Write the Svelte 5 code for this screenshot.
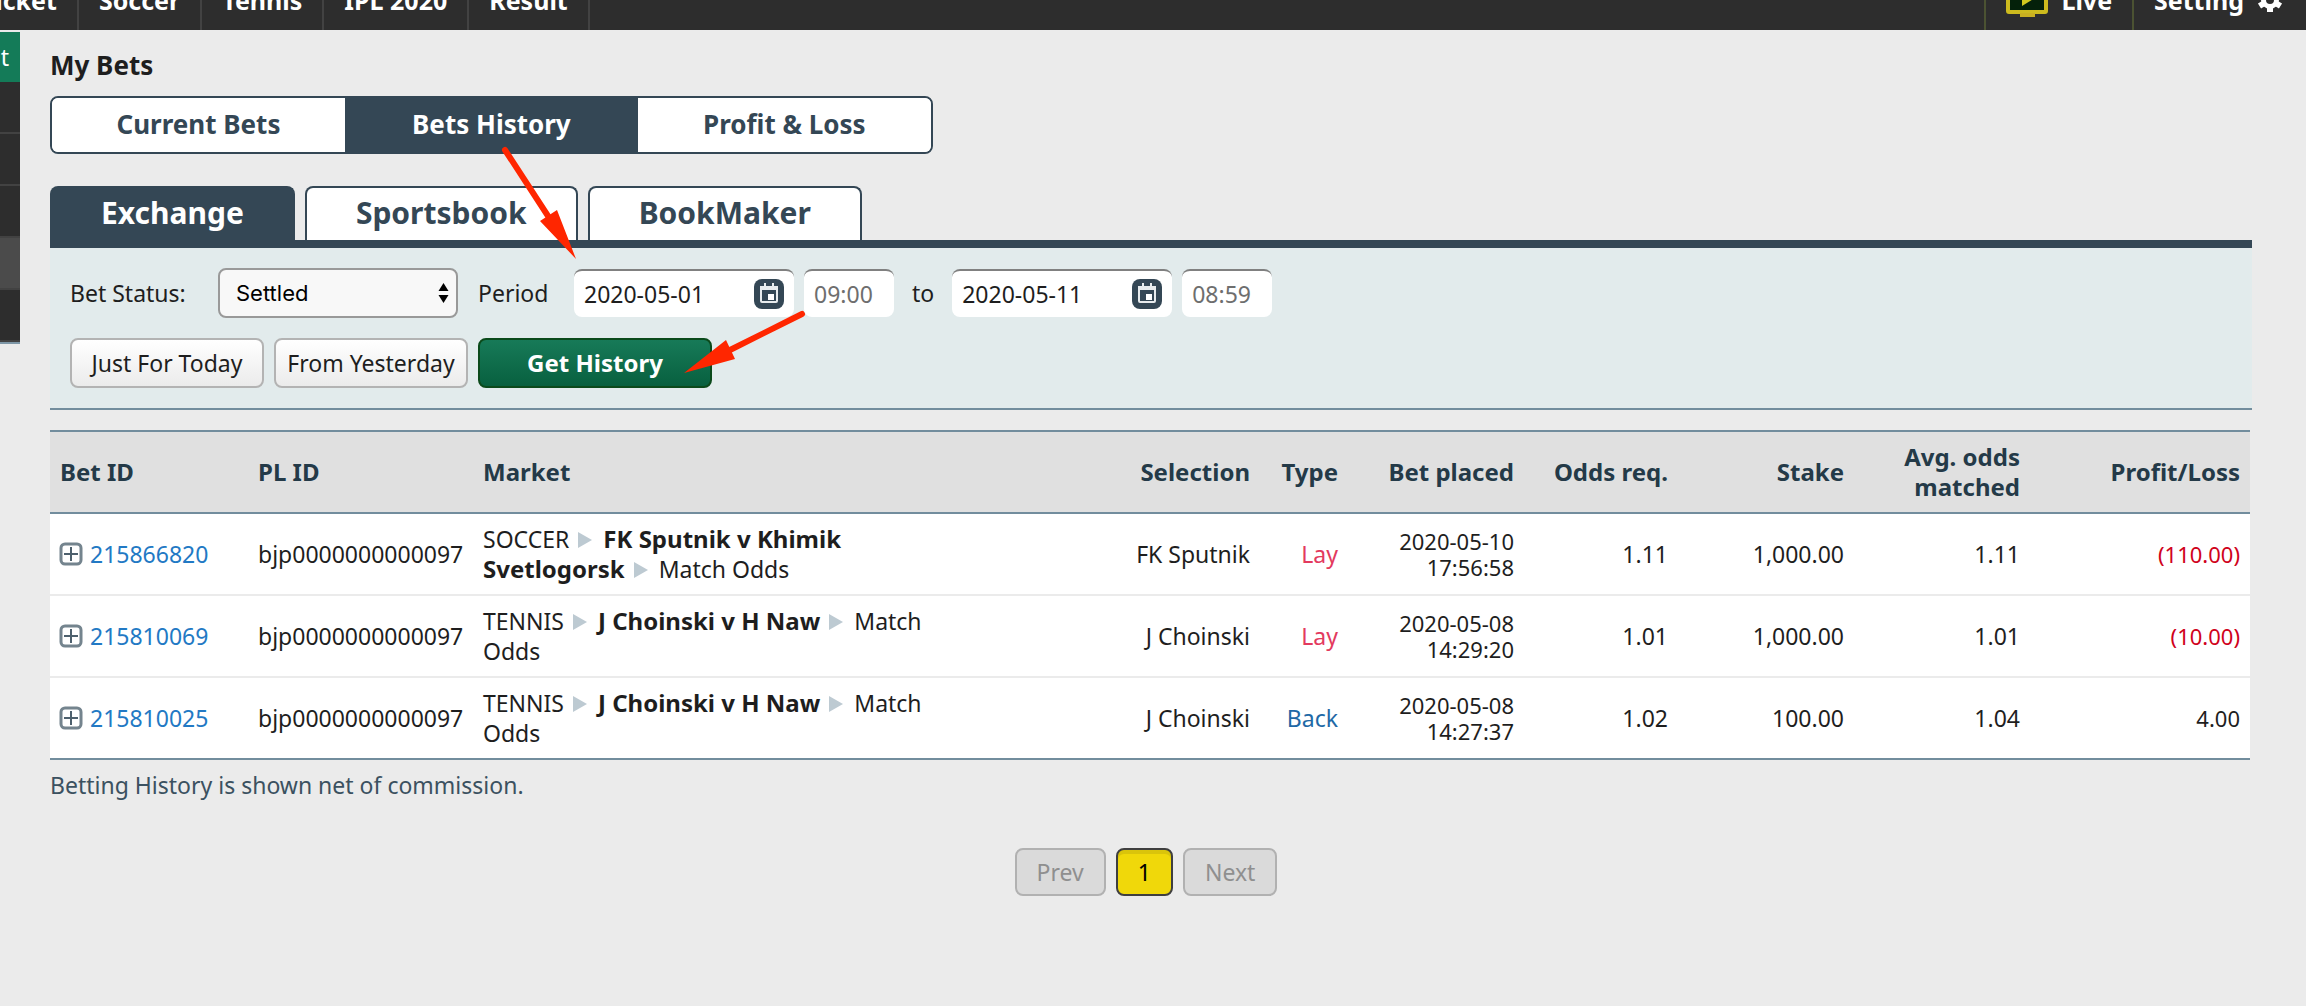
<script lang="ts">
	interface Bet {
		id: string;
		plId: string;
		sport: string;
		event: string;
		market: string;
		selection: string;
		type: 'Lay' | 'Back';
		date: string;
		time: string;
		oddsReq: string;
		stake: string;
		avgOdds: string;
		profit: number;
	}

	const menu = ['Cricket', 'Soccer', 'Tennis', 'IPL 2020', 'Result'];
	const sections = ['Current Bets', 'Bets History', 'Profit & Loss'];
	const products = ['Exchange', 'Sportsbook', 'BookMaker'];

	const bets: Bet[] = [
		{
			id: '215866820',
			plId: 'bjp0000000000097',
			sport: 'SOCCER',
			event: 'FK Sputnik v Khimik Svetlogorsk',
			market: 'Match Odds',
			selection: 'FK Sputnik',
			type: 'Lay',
			date: '2020-05-10',
			time: '17:56:58',
			oddsReq: '1.11',
			stake: '1,000.00',
			avgOdds: '1.11',
			profit: -110
		},
		{
			id: '215810069',
			plId: 'bjp0000000000097',
			sport: 'TENNIS',
			event: 'J Choinski v H Naw',
			market: 'Match Odds',
			selection: 'J Choinski',
			type: 'Lay',
			date: '2020-05-08',
			time: '14:29:20',
			oddsReq: '1.01',
			stake: '1,000.00',
			avgOdds: '1.01',
			profit: -10
		},
		{
			id: '215810025',
			plId: 'bjp0000000000097',
			sport: 'TENNIS',
			event: 'J Choinski v H Naw',
			market: 'Match Odds',
			selection: 'J Choinski',
			type: 'Back',
			date: '2020-05-08',
			time: '14:27:37',
			oddsReq: '1.02',
			stake: '100.00',
			avgOdds: '1.04',
			profit: 4
		}
	];

	let section = $state('Bets History');
	let product = $state('Exchange');
	let status = $state('Settled');
	let from = $state('2020-05-01');
	let fromTime = $state('09:00');
	let to = $state('2020-05-11');
	let toTime = $state('08:59');

	// Losses are shown in brackets, accounting style
	function money(value: number) {
		return value < 0 ? `(${Math.abs(value).toFixed(2)})` : value.toFixed(2);
	}
</script>

{#snippet calendar()}
	<svg class="calendar" viewBox="0 0 32 32" aria-hidden="true">
		<rect x="1" y="1" width="30" height="30" rx="8" fill="#344755" />
		<path d="M12 5v5M20 5v5" stroke="#e8ecee" stroke-width="2" />
		<rect x="8" y="9" width="16" height="15" rx="1" fill="none" stroke="#e8ecee" stroke-width="2" />
		<path d="M7 8h18v4H7z" fill="#e8ecee" />
		<rect x="15" y="16" width="6" height="6" fill="#fff" />
	</svg>
{/snippet}

{#snippet crumb()}
	<svg class="crumb" viewBox="0 0 14 16" aria-hidden="true"><path d="M0 0 14 8 0 16z" fill="#bdcad2" /></svg>
{/snippet}

<div class="page">
	<header>
		<nav class="menu">
			{#each menu as item (item)}
				<a href="#{item}">{item}</a>
			{/each}
		</nav>
		<div class="tools">
			<a href="#live">
				<svg class="tv" viewBox="0 0 42 36" aria-hidden="true">
					<rect x="2" y="2" width="38" height="28" rx="1" fill="#04210a" stroke="#cdbb1e" stroke-width="4" />
					<path d="M14 35v-4h15v4z" fill="#c9b021" />
					<path d="M16 8 29 16 16 24z" fill="#d3c81f" />
				</svg>
				Live
			</a>
			<a href="#setting">
				Setting
				<svg class="gear" viewBox="0 0 26 26" aria-hidden="true">
					<circle cx="13" cy="13" r="6.5" fill="none" stroke="#fff" stroke-width="5" />
					<path
						d="M13 1v5M13 20v5M2.5 7l5 3M18.5 16l5 3M2.5 19l5-3M18.5 10l5-3"
						stroke="#fff"
						stroke-width="6"
					/>
				</svg>
			</a>
		</div>
	</header>

	<div class="body">
		<aside>
			<div class="side-title"><span>Account</span></div>
			<ul>
				<li></li>
				<li></li>
				<li></li>
				<li class="active"></li>
				<li></li>
			</ul>
		</aside>

		<main>
			<h2>My Bets</h2>

			<div class="sections">
				{#each sections as item (item)}
					<button class:active={section === item} onclick={() => (section = item)}>{item}</button>
				{/each}
			</div>

			<div class="products">
				{#each products as item (item)}
					<button class:active={product === item} onclick={() => (product = item)}>{item}</button>
				{/each}
			</div>

			<form class="filter" onsubmit={(e) => e.preventDefault()}>
				<div class="line">
					<label class="status-label" for="status">Bet Status:</label>
					<div class="select">
						<select id="status" bind:value={status}>
							<option>Settled</option>
							<option>Cancelled</option>
							<option>Voided</option>
						</select>
						<svg viewBox="0 0 10 20" aria-hidden="true"><path d="M0 8 5 0l5 8zM0 12h10l-5 8z" /></svg>
					</div>
					<label class="period" for="from">Period</label>
					<div class="date">
						<input id="from" type="text" bind:value={from} />
						{@render calendar()}
					</div>
					<input class="time" type="text" aria-label="From time" bind:value={fromTime} />
					<label class="to" for="to">to</label>
					<div class="date">
						<input id="to" type="text" bind:value={to} />
						{@render calendar()}
					</div>
					<input class="time" type="text" aria-label="To time" bind:value={toTime} />
				</div>
				<div class="line">
					<button type="button" class="btn">Just For Today</button>
					<button type="button" class="btn">From Yesterday</button>
					<button type="submit" class="btn send">Get History</button>
				</div>
			</form>

			<table>
				<colgroup>
					<col class="c-id" />
					<col class="c-pl" />
					<col />
					<col class="c-selection" />
					<col class="c-type" />
					<col class="c-placed" />
					<col class="c-odds" />
					<col class="c-stake" />
					<col class="c-avg" />
					<col class="c-profit" />
				</colgroup>
				<thead>
					<tr>
						<th class="left">Bet ID</th>
						<th class="left">PL ID</th>
						<th class="left">Market</th>
						<th>Selection</th>
						<th class="type">Type</th>
						<th>Bet placed</th>
						<th>Odds req.</th>
						<th>Stake</th>
						<th>Avg. odds matched</th>
						<th>Profit/Loss</th>
					</tr>
				</thead>
				<tbody>
					{#each bets as bet (bet.id)}
						<tr>
							<td class="left">
								<a class="bet-id" href="#{bet.id}">
									<svg viewBox="0 0 24 24" aria-hidden="true">
										<rect x="1" y="2" width="20" height="20" rx="4" fill="#fff" stroke="#74848e" stroke-width="3" />
										<path d="M11 5v14M4 12h14" stroke="#4d606d" stroke-width="2" />
									</svg>
									{bet.id}
								</a>
							</td>
							<td class="left">{bet.plId}</td>
							<td class="left">
								{bet.sport}{@render crumb()}<strong>{bet.event}</strong>{@render crumb()}{bet.market}
							</td>
							<td>{bet.selection}</td>
							<td class="type {bet.type.toLowerCase()}">{bet.type}</td>
							<td class="small">{bet.date}<br />{bet.time}</td>
							<td>{bet.oddsReq}</td>
							<td>{bet.stake}</td>
							<td>{bet.avgOdds}</td>
							<td class="small" class:loss={bet.profit < 0}>{money(bet.profit)}</td>
						</tr>
					{/each}
				</tbody>
			</table>

			<p>Betting History is shown net of commission.</p>

			<div class="pages">
				<button disabled>Prev</button>
				<button class="current">1</button>
				<button disabled>Next</button>
			</div>
		</main>
	</div>

	<!-- pointers: section tab -> period, period -> submit -->
	<svg class="pointers" width="820" height="400" viewBox="0 0 820 400" aria-hidden="true">
		<path d="M505 150 548 216M802 314 730 350" />
		<path class="head" d="M576 259 540 221 557 210zM684 373 726 340 735 359z" />
	</svg>
</div>

<style>
	:global(body) {
		background: #ebebeb;
	}

	.page {
		position: relative;
		min-height: 100vh;
		overflow: hidden;
		font-family: 'Noto Sans', 'Open Sans', sans-serif;
		font-size: 23px;
		line-height: 30px;
		color: #1e1e1e;
	}

	button,
	input {
		box-sizing: border-box;
		margin: 0;
		font: inherit;
		color: inherit;
	}

	button {
		cursor: pointer;
	}

	a {
		color: inherit;
		text-decoration: none;
	}

	/* header is scrolled half out of view */
	header {
		display: flex;
		justify-content: space-between;
		height: 62px;
		margin-top: -32px;
		background: #2d2d2d;
		color: #fff;
		font-size: 25px;
		font-weight: 700;
		line-height: 64px;
	}

	.menu,
	.tools {
		display: flex;
	}

	.menu {
		margin-left: -52px;
	}

	.menu a {
		padding: 0 20px;
		border-right: 2px solid #424242;
	}

	.tools a {
		display: flex;
		align-items: center;
		gap: 13px;
		padding: 2px 20px 0;
		border-left: 2px solid #4b5232;
	}

	.tools a:last-child {
		padding-right: 23px;
	}

	.tv {
		width: 42px;
		height: 36px;
	}

	.gear {
		width: 26px;
		height: 26px;
	}

	.body {
		display: flex;
		align-items: flex-start;
		padding-top: 2px;
	}

	aside {
		flex: none;
		width: 20px;
		border-bottom: 2px solid #7e97a7;
		background: #2d2d2d;
	}

	.side-title {
		display: flex;
		justify-content: flex-end;
		padding-right: 11px;
		background: #147b58;
		color: #fff;
		line-height: 50px;
	}

	aside ul {
		margin: 0;
		padding: 0;
		list-style: none;
	}

	aside li {
		height: 50px;
		border-bottom: 2px solid #424242;
	}

	aside li.active {
		background: #4b4b4b;
	}

	main {
		flex: 1;
		min-width: 0;
		padding: 18px 54px 0 30px;
	}

	h2 {
		margin: 0 0 16px;
		font-size: 26px;
		line-height: 30px;
	}

	.sections {
		display: flex;
		width: calc(40% + 2px);
		box-sizing: border-box;
		overflow: hidden;
		border: 2px solid #344755;
		border-radius: 8px;
	}

	.sections button {
		flex: 1;
		padding: 0 0 2px;
		border: 0;
		background: #fff;
		color: #344755;
		font-size: 26px;
		font-weight: 700;
		line-height: 52px;
	}

	.products {
		display: flex;
		gap: 10px;
		margin-top: 32px;
		border-bottom: 8px solid #344755;
	}

	.products button {
		padding: 0 49px 2px;
		border: 2px solid #344755;
		border-bottom: 0;
		border-radius: 8px 8px 0 0;
		background: #fff;
		color: #344755;
		font-size: 30px;
		font-weight: 700;
		line-height: 50px;
	}

	.sections .active,
	.products .active {
		background: #344755;
		color: #fff;
	}

	.filter {
		display: flex;
		flex-direction: column;
		gap: 20px;
		padding: 20px;
		border-bottom: 2px solid #728d9d;
		background: #e2ebec;
	}

	.line {
		display: flex;
		gap: 10px;
		align-items: center;
	}

	.status-label {
		width: 138px;
	}

	.select {
		position: relative;
		display: flex;
		width: 240px;
		margin-right: 10px;
	}

	select {
		width: 100%;
		height: 50px;
		padding: 0 16px;
		appearance: none;
		border: 2px solid #999;
		border-radius: 8px;
		background: #f8f8f8;
		color: #000;
		font-family: Inter, sans-serif;
		font-size: 22px;
	}

	.select svg {
		position: absolute;
		top: 15px;
		right: 9px;
		width: 11px;
		height: 20px;
		pointer-events: none;
	}

	.period {
		width: 86px;
	}

	.date {
		position: relative;
		display: flex;
		width: 220px;
	}

	.date input,
	.time {
		width: 100%;
		height: 48px;
		padding: 0 10px;
		border: 0;
		border-top: 2px solid #808080;
		border-radius: 8px;
		background: #fff;
	}

	.time {
		width: 90px;
		color: #6e6e6e;
	}

	.to {
		padding: 0 8px;
	}

	.calendar {
		position: absolute;
		top: 9px;
		right: 9px;
		width: 32px;
		height: 32px;
	}

	.btn {
		width: 194px;
		height: 50px;
		padding: 0;
		border: 2px solid #b3b3b3;
		border-radius: 8px;
		background: linear-gradient(#fff, #ebebeb);
	}

	.btn.send {
		width: 234px;
		border-color: #0b4a1b;
		background: linear-gradient(#177a58, #08603f);
		color: #fff;
		font-size: 24px;
		font-weight: 700;
	}

	table {
		width: calc(100% - 2px);
		margin-top: 20px;
		table-layout: fixed;
		border-spacing: 0;
		border-top: 2px solid #728d9d;
		border-bottom: 2px solid #728d9d;
		background: #fff;
	}

	.c-id {
		width: 9%;
	}

	.c-pl {
		width: 225px;
	}

	.c-selection {
		width: 14%;
	}

	.c-type {
		width: 4%;
	}

	.c-placed,
	.c-stake,
	.c-avg {
		width: 8%;
	}

	.c-odds {
		width: 7%;
	}

	.c-profit {
		width: 10%;
	}

	th,
	td {
		height: 60px;
		padding: 10px;
		text-align: right;
		vertical-align: middle;
	}

	th {
		border-bottom: 2px solid #728d9d;
		background: #e0e0e0;
		color: #243a48;
		font-size: 24px;
	}

	td {
		border-bottom: 2px solid #ebebeb;
	}

	tbody tr:last-child td {
		border-bottom: 0;
	}

	strong {
		font-size: 24px;
	}

	.left {
		text-align: left;
	}

	.type {
		white-space: nowrap;
	}

	.bet-id {
		display: flex;
		align-items: center;
		gap: 6px;
		color: #2279c4;
	}

	.bet-id svg {
		width: 24px;
		height: 24px;
		overflow: visible;
	}

	.crumb {
		width: 14px;
		height: 16px;
		margin: 0 11px 0 9px;
	}

	.small {
		font-size: 22px;
		line-height: 26px;
	}

	.lay {
		color: #e33a5e;
	}

	.back {
		color: #1f69a6;
	}

	.loss {
		color: #d0021b;
	}

	p {
		margin: 10px 0 0;
		color: #3b5160;
	}

	.pages {
		display: flex;
		justify-content: center;
		gap: 10px;
		margin-top: 48px;
		padding-right: 10px;
	}

	.pages button {
		height: 48px;
		padding: 0 20px;
		border: 2px solid #b1b1b1;
		border-radius: 8px;
		background: #dadada;
		color: #8f8f8f;
	}

	.pages .current {
		border-color: #3f3f3f;
		background: #f0d80a;
		box-shadow: inset 0 4px 0 #dac40b;
		color: #000;
	}

	.pointers {
		position: absolute;
		top: 0;
		left: 0;
		pointer-events: none;
		fill: none;
		stroke: #ff2600;
		stroke-width: 6;
		stroke-linecap: round;
	}

	.pointers .head {
		fill: #ff2600;
		stroke: none;
	}
</style>
